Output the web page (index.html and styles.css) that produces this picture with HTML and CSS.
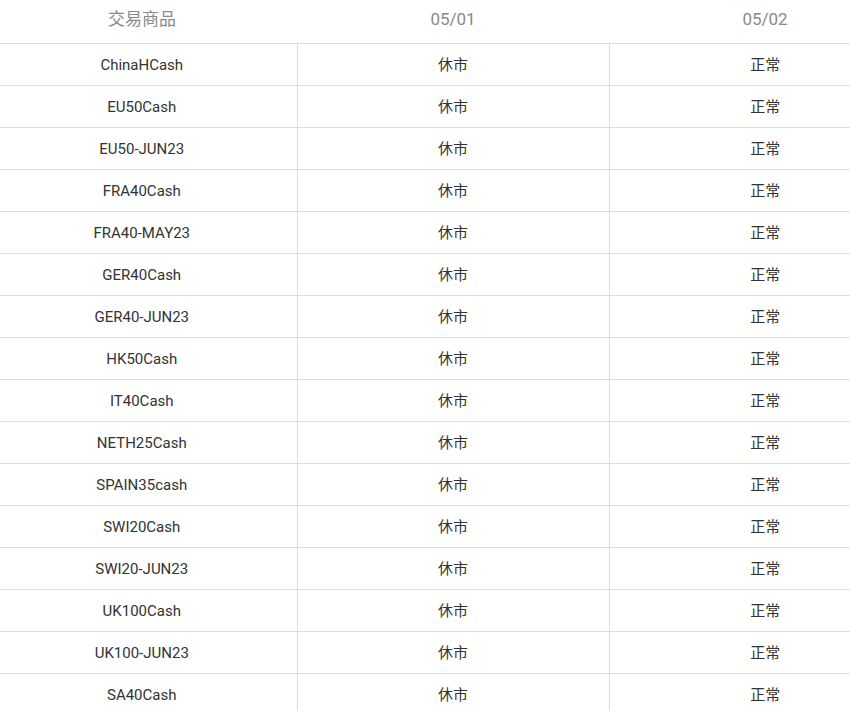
FILE: index.html
```html
<!DOCTYPE html>
<html lang="zh">
<head>
<meta charset="utf-8">
<link rel="stylesheet" href="styles.css">
</head>
<body>
<div class="wrap">
<table class="tbl">
<thead>
<tr><th>交易商品</th><th>05/01</th><th>05/02</th></tr>
</thead>
<tbody>
<tr><td>ChinaHCash</td><td>休市</td><td>正常</td></tr>
<tr><td>EU50Cash</td><td>休市</td><td>正常</td></tr>
<tr><td>EU50-JUN23</td><td>休市</td><td>正常</td></tr>
<tr><td>FRA40Cash</td><td>休市</td><td>正常</td></tr>
<tr><td>FRA40-MAY23</td><td>休市</td><td>正常</td></tr>
<tr><td>GER40Cash</td><td>休市</td><td>正常</td></tr>
<tr><td>GER40-JUN23</td><td>休市</td><td>正常</td></tr>
<tr><td>HK50Cash</td><td>休市</td><td>正常</td></tr>
<tr><td>IT40Cash</td><td>休市</td><td>正常</td></tr>
<tr><td>NETH25Cash</td><td>休市</td><td>正常</td></tr>
<tr><td>SPAIN35cash</td><td>休市</td><td>正常</td></tr>
<tr><td>SWI20Cash</td><td>休市</td><td>正常</td></tr>
<tr><td>SWI20-JUN23</td><td>休市</td><td>正常</td></tr>
<tr><td>UK100Cash</td><td>休市</td><td>正常</td></tr>
<tr><td>UK100-JUN23</td><td>休市</td><td>正常</td></tr>
<tr><td>SA40Cash</td><td>休市</td><td>正常</td></tr>
</tbody>
</table>
</div>
</body>
</html>
```
FILE: styles.css
```css
html, body {
  margin: 0;
  padding: 0;
  background: #fff;
}
body {
  font-family: Roboto, "Noto Sans CJK SC", sans-serif;
}
.wrap {
  width: 850px;
  height: 711px;
  overflow: hidden;
}
.tbl {
  margin-left: -15px;
  width: 936px;
  border-collapse: collapse;
  table-layout: fixed;
}
.tbl th {
  height: 43px;
  padding: 0 0 4px 0;
  font-size: 17px;
  font-weight: 400;
  color: #8a8a8a;
  text-align: center;
  border-bottom: 1px solid #dddddd;
  vertical-align: middle;
  line-height: 1;
  box-sizing: border-box;
}
.tbl th:first-child {
  padding-left: 2px;
}
.tbl td {
  height: 39px;
  padding: 0 0 2px 0;
  font-size: 15px;
  color: #333;
  text-align: center;
  vertical-align: middle;
  border-bottom: 1px solid #dddddd;
  border-left: 1px solid #dddddd;
}
.tbl td:first-child {
  border-left: none;
  padding: 2px 0 0 2px;
}
```
